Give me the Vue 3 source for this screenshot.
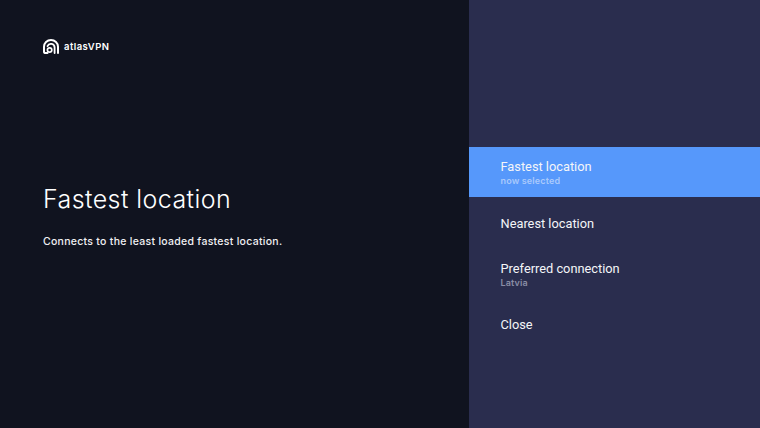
<script setup>
const options = [
  { label: 'Fastest location', sub: 'now selected', active: true },
  { label: 'Nearest location' },
  { label: 'Preferred connection', sub: 'Latvia' },
  { label: 'Close' }
]
</script>

<template>
  <div class="screen">
    <div class="info">
      <div class="logo">
        <svg class="logo-icon" width="16" height="15" viewBox="0 0 16 15" fill="none">
          <path d="M4.5 14H2.6A1.6 1.6 0 0 1 1 12.4V7.8a7 6.8 0 0 1 14 0V14" stroke="#fff" stroke-width="2" stroke-linecap="round" />
          <path d="M11.6 14V8.4a3.7 3.6 0 0 0-7.1-1.3" stroke="#fff" stroke-width="1.8" stroke-linecap="round" />
          <circle cx="6.6" cy="11" r="2.2" stroke="#fff" stroke-width="1.7" />
        </svg>
        <span class="logo-text">atlasVPN</span>
      </div>
      <h1 class="title">Fastest location</h1>
      <p class="desc">Connects to the least loaded fastest location.</p>
    </div>
    <div class="menu">
      <div
        v-for="opt in options"
        :key="opt.label"
        class="row"
        :class="{ active: opt.active }"
      >
        <div class="label">{{ opt.label }}</div>
        <div v-if="opt.sub" class="sub">{{ opt.sub }}</div>
      </div>
    </div>
  </div>
</template>

<style>
html, body {
  margin: 0;
  background: #10131f;
}
</style>

<style scoped>
.screen {
  display: flex;
  width: 760px;
  height: 428px;
  overflow: hidden;
  background: #10131f;
  color: #fff;
}
.info {
  width: 468.5px;
  box-sizing: border-box;
  padding: 38px 0 0 43px;
  font-family: 'Inter', 'Open Sans', sans-serif;
}
.logo {
  display: flex;
  align-items: center;
  gap: 5px;
  height: 17px;
}
.logo-text {
  font-size: 9.5px;
  font-weight: 600;
  letter-spacing: 0.45px;
}
.title {
  margin: 128px 0 0;
  font-size: 25px;
  font-weight: 350;
  line-height: 32px;
  letter-spacing: 0.42px;
}
.desc {
  margin: 20px 0 0;
  font-size: 10.5px;
  font-weight: 500;
  line-height: 14px;
  letter-spacing: 0.28px;
  color: #f0f0f3;
}
.menu {
  flex: 1;
  padding-top: 147px;
  background: #2a2d4e;
  font-family: 'Roboto', sans-serif;
}
.row {
  display: flex;
  flex-direction: column;
  justify-content: center;
  box-sizing: border-box;
  height: 50px;
  margin-bottom: 1px;
  padding: 2px 0 0 32px;
}
.row:nth-child(3) {
  margin-bottom: 0;
}
.row.active {
  background: #5698fb;
}
.label {
  font-size: 12.8px;
  line-height: 16px;
  color: #f4f5f8;
}
.sub {
  margin-bottom: 2px;
  font-family: 'Inter', sans-serif;
  font-size: 9px;
  font-weight: 600;
  line-height: 11px;
  letter-spacing: 0.15px;
  color: #8a8da6;
}
.row.active .sub {
  color: #a9c9fb;
}
</style>
